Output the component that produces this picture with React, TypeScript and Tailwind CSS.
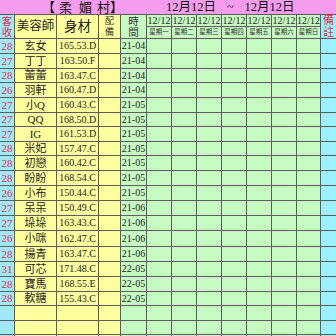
import React from "react";

type Row = { n: string; name: string; size: string; time: string };

const rows: Row[] = [
  { n: "28", name: "玄女", size: "165.53.D", time: "21-04" },
  { n: "27", name: "丁丁", size: "163.50.F", time: "21-04" },
  { n: "28", name: "蕾蕾", size: "163.47.C", time: "21-04" },
  { n: "26", name: "羽軒", size: "160.47.D", time: "21-04" },
  { n: "27", name: "小Q", size: "160.43.C", time: "21-05" },
  { n: "27", name: "QQ", size: "168.50.D", time: "21-05" },
  { n: "27", name: "IG", size: "161.53.D", time: "21-05" },
  { n: "28", name: "米妃", size: "157.47.C", time: "21-05" },
  { n: "28", name: "初戀", size: "160.42.C", time: "21-05" },
  { n: "28", name: "盼盼", size: "168.54.C", time: "21-05" },
  { n: "26", name: "小布", size: "150.44.C", time: "21-05" },
  { n: "27", name: "呆呆", size: "150.49.C", time: "21-06" },
  { n: "27", name: "垛垛", size: "163.43.C", time: "21-06" },
  { n: "26", name: "小咪", size: "162.47.C", time: "21-06" },
  { n: "28", name: "揚青", size: "163.47.C", time: "21-06" },
  { n: "31", name: "可芯", size: "171.48.C", time: "22-05" },
  { n: "28", name: "寶馬", size: "168.55.E", time: "22-05" },
  { n: "28", name: "軟糖", size: "155.43.C", time: "22-05" },
  { n: "", name: "", size: "", time: "" },
  { n: "", name: "", size: "", time: "" },
  { n: "", name: "", size: "", time: "" },
];

const days = ["星期一", "星期二", "星期三", "星期四", "星期五", "星期六", "星期日"];

const cyan = "bg-[#9fe9fb]";
const cyan2 = "bg-[#9cf0ff]";
const yellow = "bg-[#ffff9f]";
const green = "bg-[#c6fcc2]";
const cell = "flex items-center justify-center leading-none overflow-hidden";

export default function App() {
  return (
    <div className="w-[336px] h-[336px] overflow-hidden bg-white font-['Liberation_Serif','Noto_Sans_CJK_TC',serif]">
      <div className="grid grid-cols-[14px_41px_41px_21px_25px_24px_24px_24px_24px_24px_24px_23px_15px] grid-rows-[14px_11px_11px_14px_14px_13px_14px_14px_13px_14px_13px_14px_14px_14px_14px_14px_15px_14px_14px_14px_13px_14px_13px_14px] gap-px bg-[#5e5e5e] h-[350px]">
        {/* title */}
        <div className="col-span-13 bg-[#f59cee] flex items-center text-[13px] leading-none text-[#111]">
          <span className="ml-[42px] w-[13px]">【</span>
          <span className="ml-[4px]">柔</span>
          <span className="ml-[7px]">媚</span>
          <span className="ml-[5px]">村</span>
          <span className="w-[13px]">】</span>
          <span className="ml-[43px] text-[12.5px]">12月12日</span>
          <span className="ml-[11px] text-[12px]">~</span>
          <span className="ml-[11px] text-[12.5px]">12月12日</span>
        </div>

        {/* header */}
        <div className={`row-span-2 ${cyan} flex flex-col items-center justify-center text-[10.5px] leading-[11px] text-[#e0304a]`}>
          <span>客</span>
          <span>收</span>
        </div>
        <div className={`row-span-2 ${yellow} ${cell} text-[12.5px] text-[#222]`}>美容師</div>
        <div className={`row-span-2 ${yellow} ${cell} text-[13.5px] text-[#222]`}>身材</div>
        <div className={`row-span-2 ${yellow} flex flex-col items-center justify-center text-[9px] leading-[10.5px] text-[#333]`}>
          <span>配</span>
          <span>備</span>
        </div>
        <div className={`row-span-2 ${green} flex flex-col items-center justify-center text-[10.5px] leading-[11px] text-[#333]`}>
          <span>時</span>
          <span>間</span>
        </div>
        {days.map((d) => (
          <div key={"t" + d} className={`${green} ${cell} text-[10px] text-[#222]`}>
            12/12
          </div>
        ))}
        <div className={`row-span-2 ${cyan2} flex flex-col items-center justify-center text-[11px] leading-[11.5px] text-[#e0304a]`}>
          <span>備</span>
          <span>註</span>
        </div>
        {days.map((d) => (
          <div key={d} className={`${green} ${cell} text-[6.5px] text-[#333]`}>
            {d}
          </div>
        ))}

        {/* body */}
        {rows.map((r, i) => (
          <React.Fragment key={i}>
            <div className={`${cyan} ${cell} text-[11px] text-[#e0304a]`}>{r.n}</div>
            <div className={`${yellow} ${cell} text-[11px] text-[#222]`}>{r.name}</div>
            <div className={`${yellow} ${cell} text-[10px] text-[#222]`}>{r.size}</div>
            <div className={`${yellow}`} />
            <div className={`${green} ${cell} text-[10px] text-[#222]`}>{r.time}</div>
            <div className={green} />
            <div className={green} />
            <div className={green} />
            <div className={green} />
            <div className={green} />
            <div className={green} />
            <div className={green} />
            <div className={cyan2} />
          </React.Fragment>
        ))}
      </div>
    </div>
  );
}
